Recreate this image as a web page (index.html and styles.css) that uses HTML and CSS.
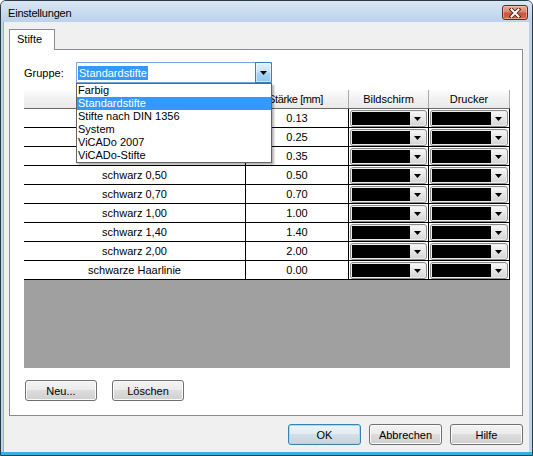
FILE: index.html
```html
<!DOCTYPE html>
<html lang="de">
<head>
<meta charset="utf-8">
<title>Einstellungen</title>
<link rel="stylesheet" href="styles.css">
</head>
<body>
<div class="window">
  <div class="titlebar">
    <span class="title">Einstellungen</span>
    <span class="close">
      <svg width="12" height="10" viewBox="0 0 12 10"><path d="M2.5 1.5 L9.5 8.5 M9.5 1.5 L2.5 8.5" stroke="#4d1d12" stroke-width="3.8" stroke-linecap="square" fill="none"/><path d="M2.5 1.5 L9.5 8.5 M9.5 1.5 L2.5 8.5" stroke="#ffffff" stroke-width="2" stroke-linecap="square" fill="none"/></svg>
    </span>
  </div>
  <div class="client">
    <div class="tabs"><div class="tab">Stifte</div></div>
    <div class="pane">
      <div class="group">
        <span class="label">Gruppe:</span>
        <div class="combo">
          <span class="combo-text"><span class="sel">Standardstifte</span></span>
          <span class="combo-btn"><svg width="7" height="4" viewBox="0 0 7 4"><polygon points="0,0 7,0 3.5,4" fill="#000"/></svg></span>
          <ul class="droplist">
            <li>Farbig</li>
            <li class="hl">Standardstifte</li>
            <li>Stifte nach DIN 1356</li>
            <li>System</li>
            <li>ViCADo 2007</li>
            <li>ViCADo-Stifte</li>
          </ul>
        </div>
      </div>
      <div class="grid">
        <div class="thead">
          <div class="th"></div>
          <div class="th th-clip"><span>Stärke [mm]</span></div>
          <div class="th">Bildschirm</div>
          <div class="th">Drucker</div>
        </div>
        <div class="tr"><div class="td"></div><div class="td">0.13</div><div class="td"><span class="cc"><span class="sw"></span><span class="cb"><svg width="7" height="4" viewBox="0 0 7 4"><polygon points="0,0 7,0 3.5,4" fill="#000"/></svg></span></span></div><div class="td"><span class="cc"><span class="sw"></span><span class="cb"><svg width="7" height="4" viewBox="0 0 7 4"><polygon points="0,0 7,0 3.5,4" fill="#000"/></svg></span></span></div></div>
        <div class="tr"><div class="td"></div><div class="td">0.25</div><div class="td"><span class="cc"><span class="sw"></span><span class="cb"><svg width="7" height="4" viewBox="0 0 7 4"><polygon points="0,0 7,0 3.5,4" fill="#000"/></svg></span></span></div><div class="td"><span class="cc"><span class="sw"></span><span class="cb"><svg width="7" height="4" viewBox="0 0 7 4"><polygon points="0,0 7,0 3.5,4" fill="#000"/></svg></span></span></div></div>
        <div class="tr"><div class="td"></div><div class="td">0.35</div><div class="td"><span class="cc"><span class="sw"></span><span class="cb"><svg width="7" height="4" viewBox="0 0 7 4"><polygon points="0,0 7,0 3.5,4" fill="#000"/></svg></span></span></div><div class="td"><span class="cc"><span class="sw"></span><span class="cb"><svg width="7" height="4" viewBox="0 0 7 4"><polygon points="0,0 7,0 3.5,4" fill="#000"/></svg></span></span></div></div>
        <div class="tr"><div class="td">schwarz 0,50</div><div class="td">0.50</div><div class="td"><span class="cc"><span class="sw"></span><span class="cb"><svg width="7" height="4" viewBox="0 0 7 4"><polygon points="0,0 7,0 3.5,4" fill="#000"/></svg></span></span></div><div class="td"><span class="cc"><span class="sw"></span><span class="cb"><svg width="7" height="4" viewBox="0 0 7 4"><polygon points="0,0 7,0 3.5,4" fill="#000"/></svg></span></span></div></div>
        <div class="tr"><div class="td">schwarz 0,70</div><div class="td">0.70</div><div class="td"><span class="cc"><span class="sw"></span><span class="cb"><svg width="7" height="4" viewBox="0 0 7 4"><polygon points="0,0 7,0 3.5,4" fill="#000"/></svg></span></span></div><div class="td"><span class="cc"><span class="sw"></span><span class="cb"><svg width="7" height="4" viewBox="0 0 7 4"><polygon points="0,0 7,0 3.5,4" fill="#000"/></svg></span></span></div></div>
        <div class="tr"><div class="td">schwarz 1,00</div><div class="td">1.00</div><div class="td"><span class="cc"><span class="sw"></span><span class="cb"><svg width="7" height="4" viewBox="0 0 7 4"><polygon points="0,0 7,0 3.5,4" fill="#000"/></svg></span></span></div><div class="td"><span class="cc"><span class="sw"></span><span class="cb"><svg width="7" height="4" viewBox="0 0 7 4"><polygon points="0,0 7,0 3.5,4" fill="#000"/></svg></span></span></div></div>
        <div class="tr"><div class="td">schwarz 1,40</div><div class="td">1.40</div><div class="td"><span class="cc"><span class="sw"></span><span class="cb"><svg width="7" height="4" viewBox="0 0 7 4"><polygon points="0,0 7,0 3.5,4" fill="#000"/></svg></span></span></div><div class="td"><span class="cc"><span class="sw"></span><span class="cb"><svg width="7" height="4" viewBox="0 0 7 4"><polygon points="0,0 7,0 3.5,4" fill="#000"/></svg></span></span></div></div>
        <div class="tr"><div class="td">schwarz 2,00</div><div class="td">2.00</div><div class="td"><span class="cc"><span class="sw"></span><span class="cb"><svg width="7" height="4" viewBox="0 0 7 4"><polygon points="0,0 7,0 3.5,4" fill="#000"/></svg></span></span></div><div class="td"><span class="cc"><span class="sw"></span><span class="cb"><svg width="7" height="4" viewBox="0 0 7 4"><polygon points="0,0 7,0 3.5,4" fill="#000"/></svg></span></span></div></div>
        <div class="tr"><div class="td">schwarze Haarlinie</div><div class="td">0.00</div><div class="td"><span class="cc"><span class="sw"></span><span class="cb"><svg width="7" height="4" viewBox="0 0 7 4"><polygon points="0,0 7,0 3.5,4" fill="#000"/></svg></span></span></div><div class="td"><span class="cc"><span class="sw"></span><span class="cb"><svg width="7" height="4" viewBox="0 0 7 4"><polygon points="0,0 7,0 3.5,4" fill="#000"/></svg></span></span></div></div>
        <div class="empty"></div>
      </div>
      <div class="pane-buttons">
        <button class="btn">Neu...</button>
        <button class="btn">Löschen</button>
      </div>
    </div>
    <div class="dialog-buttons">
      <button class="btn default">OK</button>
      <button class="btn">Abbrechen</button>
      <button class="btn">Hilfe</button>
    </div>
  </div>
</div>
</body>
</html>
```

FILE: styles.css
```css
* { box-sizing: border-box; }
html, body { margin: 0; padding: 0; }
body {
  width: 533px;
  height: 456px;
  overflow: hidden;
  background: #ffffff;
  font-family: "Liberation Sans", Arial, sans-serif;
  font-size: 11px;
  color: #000;
}
.window {
  width: 533px;
  height: 456px;
  border: 1px solid #2c3946;
  border-radius: 6px 6px 0 0;
  background: linear-gradient(to top, #35b1e6 0, #35b1e6 3px, #bcd3ec 3px);
  display: flex;
  flex-direction: column;
  overflow: hidden;
}
.titlebar {
  flex: none;
  height: 21px;
  display: flex;
  justify-content: space-between;
  align-items: flex-start;
  padding: 0 4px 0 7px;
  background: linear-gradient(#d9e6f4, #bbd2eb);
}
.title {
  margin-top: 5px;
  line-height: 14px;
  letter-spacing: -0.2px;
  color: #000;
}
.close {
  margin-top: 4px;
  width: 26px;
  height: 15px;
  border: 1px solid #6a2719;
  border-radius: 3px;
  background: linear-gradient(#eaa998 0%, #dc8670 45%, #c9553c 55%, #d06a50 100%);
  box-shadow: inset 0 0 0 1px rgba(255, 220, 210, 0.45);
  display: flex;
  align-items: center;
  justify-content: center;
}
.close svg { display: block; }
.client {
  flex: 1;
  margin: 0 3px 3px 3px;
  background: #f0f0f0;
  display: flex;
  flex-direction: column;
  box-shadow: -1px 0 0 #8fb3d6;
}
.tabs {
  display: flex;
  padding: 7px 0 0 5px;
}
.tab {
  position: relative;
  z-index: 1;
  width: 46px;
  height: 21px;
  margin-bottom: -1px;
  border: 1px solid #898c95;
  border-bottom: none;
  background: #ffffff;
  padding-left: 7px;
  line-height: 18px;
}
.pane {
  margin-left: 5px;
  width: 514px;
  height: 367px;
  border: 1px solid #898c95;
  background: #ffffff;
  display: flex;
  flex-direction: column;
}
.group {
  display: flex;
  align-items: center;
  height: 21px;
  margin: 12px 0 0 14px;
}
.label { width: 52px; }
.combo {
  position: relative;
  width: 196px;
  height: 21px;
  border: 1px solid #7ba5d3;
  background: #fff;
  display: flex;
  align-items: center;
}
.combo-text { flex: 1; display: flex; }
.sel {
  margin-left: 1px;
  padding: 0 1px;
  line-height: 14px;
  background: #3399ff;
  color: #fff;
}
.combo-btn {
  align-self: stretch;
  width: 17px;
  margin: -1px -1px -1px 0;
  border: 1px solid #3c7fb1;
  border-radius: 0 2px 2px 0;
  background: linear-gradient(#e3f2fc 0%, #c4e4f8 45%, #a6d4f3 55%, #92c8ee 100%);
  box-shadow: inset 0 0 0 1px rgba(255, 255, 255, 0.5);
  display: flex;
  align-items: center;
  justify-content: center;
}
.combo-btn svg, .cb svg { display: block; }
.droplist {
  position: absolute;
  z-index: 10;
  left: -1px;
  top: calc(100% + 1px);
  width: 196px;
  margin: 0;
  padding: 0;
  list-style: none;
  background: #fff;
  border: 1px solid #646464;
  box-shadow: 2px 2px 2px rgba(0, 0, 0, 0.3);
}
.droplist li {
  height: 13px;
  line-height: 13px;
  padding-left: 1px;
  white-space: nowrap;
}
.droplist li.hl { background: #3399ff; color: #fff; }
.grid {
  margin: 7px 0 0 14px;
  width: 486px;
  height: 278px;
  background: #a0a0a0;
  display: flex;
  flex-direction: column;
}
.thead, .tr {
  display: grid;
  grid-template-columns: 222px 103px 80px 81px;
  flex: none;
}
.thead {
  height: 19px;
  border-bottom: 1px solid #6a6a6a;
}
.th {
  height: 18px;
  line-height: 18px;
  text-align: center;
  white-space: nowrap;
  overflow: hidden;
  background: linear-gradient(#fdfdfd, #f1f1f1 50%, #e9e9e9);
  border-right: 1px solid #a9a9a9;
}
.th-clip {
  display: flex;
  justify-content: flex-end;
  padding-right: 25px;
  letter-spacing: -0.4px;
}
.tr {
  height: 19px;
  background: #fff;
  border-bottom: 1px solid #000;
}
.td {
  height: 18px;
  line-height: 18px;
  text-align: center;
  white-space: nowrap;
  border-right: 1px solid #000;
}
.cc {
  display: flex;
  height: 17px;
  margin: 1px 1px 0 1px;
  border: 1px solid #8b8b8b;
  border-radius: 3px;
  padding: 1px;
  background: #ececec;
}
.sw { flex: 1; background: #000; }
.cb {
  width: 15px;
  display: flex;
  align-items: center;
  justify-content: center;
  border-radius: 0 2px 2px 0;
  background: linear-gradient(#f6f6f6, #e6e6e6 50%, #d6d6d6);
}
.empty { flex: 1; }
.pane-buttons {
  display: flex;
  gap: 15px;
  margin: 12px 0 0 15px;
}
.btn {
  width: 72px;
  height: 21px;
  padding: 0;
  margin: 0;
  font-family: "Liberation Sans", Arial, sans-serif;
  font-size: 11px;
  color: #000;
  border: 1px solid #707070;
  border-radius: 3px;
  background: linear-gradient(#f3f3f3 0%, #ebebeb 49%, #dddddd 50%, #cfcfcf 100%);
  box-shadow: inset 0 0 0 1px #fbfbfb;
}
.dialog-buttons {
  display: flex;
  justify-content: flex-end;
  gap: 8px;
  margin-top: 8px;
  padding-right: 6px;
}
.dialog-buttons .btn { width: 73px; }
.btn.default {
  border-color: #3c7fb1;
  background: linear-gradient(#eef4f8 0%, #e3ebf1 49%, #d3dfe8 50%, #c6d5e1 100%);
  box-shadow: inset 0 0 0 1px #9fdcf8;
}
```
